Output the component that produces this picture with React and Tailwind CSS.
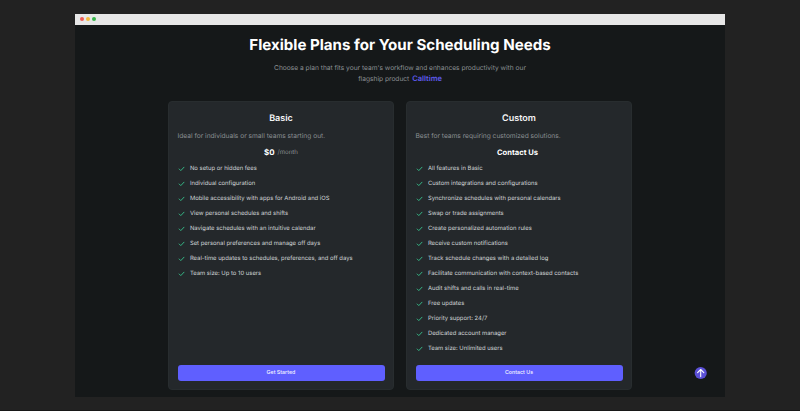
import React from "react";

const basic = [
  "No setup or hidden fees",
  "Individual configuration",
  "Mobile accessibility with apps for Android and iOS",
  "View personal schedules and shifts",
  "Navigate schedules with an intuitive calendar",
  "Set personal preferences and manage off days",
  "Real-time updates to schedules, preferences, and off days",
  "Team size: Up to 10 users",
];

const custom = [
  "All features in Basic",
  "Custom integrations and configurations",
  "Synchronize schedules with personal calendars",
  "Swap or trade assignments",
  "Create personalized automation rules",
  "Receive custom notifications",
  "Track schedule changes with a detailed log",
  "Facilitate communication with context-based contacts",
  "Audit shifts and calls in real-time",
  "Free updates",
  "Priority support: 24/7",
  "Dedicated account manager",
  "Team size: Unlimited users",
];

function Check() {
  return (
    <svg className="h-[7px] w-[7px] shrink-0 text-[#35b585]" viewBox="0 0 7 7" fill="none" stroke="currentColor" strokeWidth="1" strokeLinecap="round" strokeLinejoin="round">
      <path d="M1.2 3 L2.8 4.6 L6 1.2" />
    </svg>
  );
}

function Plan({ name, description, price, features, action }) {
  return (
    <section className="flex h-[289px] w-[226px] flex-col rounded-[4px] border border-[#282d2f] bg-[#24282b] px-[8.5px] pt-[10px] pb-[8.5px]">
      <h2 className="text-center text-[9px] leading-[14px] font-semibold text-[#f4f5f6]">{name}</h2>
      <p className="mt-[5px] text-[6.63px] leading-[10px] text-[#8b9093]">{description}</p>
      <div className="mt-[6px] flex h-[12px] items-center justify-center">{price}</div>
      <ul className="mt-[2.6px] flex flex-col">
        {features.map((feature) => (
          <li key={feature} className="flex h-[15px] items-center gap-[5.4px]">
            <Check />
            <span className="text-[5.9px] leading-[10px] whitespace-nowrap text-[#d0d4d6]">{feature}</span>
          </li>
        ))}
      </ul>
      <button className="mt-auto h-[15.5px] shrink-0 rounded-[3px] bg-[#5f5fff] text-[5.3px] leading-none font-medium text-[#f3f3ff]">{action}</button>
    </section>
  );
}

export default function App() {
  return (
    <div className="h-[411px] w-[800px] overflow-hidden border-b border-[#171717] bg-[#222222] pt-[14px] font-['Inter',sans-serif] [text-rendering:geometricPrecision]">
      <div className="relative mx-auto flex h-[383px] w-[650px] flex-col bg-[#151819]">
        <div className="flex h-[10.5px] shrink-0 items-center gap-[2.4px] bg-[#e7e7e7] pl-[4.6px]">
          <span className="h-[4px] w-[4px] rounded-full bg-[#ee5b55]" />
          <span className="h-[4px] w-[4px] rounded-full bg-[#f3bb3d]" />
          <span className="h-[4px] w-[4px] rounded-full bg-[#36b54a]" />
        </div>
        <h1 className="mt-[10.5px] text-center text-[15.1px] leading-[20px] font-bold text-white">Flexible Plans for Your Scheduling Needs</h1>
        <p className="mt-[8px] mb-[17px] text-center text-[6.63px] leading-[10.5px] text-[#8c9194]">
          Choose a plan that fits your team's workflow and enhances productivity with our
          <br />
          flagship product <span className="ml-[1px] text-[7.5px] font-semibold text-[#5f5bef]">Calltime</span>
        </p>
        <div className="flex justify-center gap-[12px]">
          <Plan
            name="Basic"
            description="Ideal for individuals or small teams starting out."
            price={
              <>
                <span className="text-[7.9px] font-bold text-white">$0</span>
                <span className="ml-[3px] text-[6.1px] text-[#8b9093]">/month</span>
              </>
            }
            features={basic}
            action="Get Started"
          />
          <Plan
            name="Custom"
            description="Best for teams requiring customized solutions."
            price={<span className="mr-[3px] text-[7.6px] font-bold text-white">Contact Us</span>}
            features={custom}
            action="Contact Us"
          />
        </div>
        <svg className="absolute top-[352px] left-[619px] h-[14px] w-[14px]" viewBox="0 0 14 14" fill="none">
          <circle cx="6.7" cy="7" r="6.1" fill="#5b50d6" />
          <path d="M6.7 10.6 V3.6 M3.6 6.6 L6.7 3.5 L9.8 6.6" stroke="white" strokeWidth="1.1" strokeLinecap="round" strokeLinejoin="round" />
        </svg>
      </div>
    </div>
  );
}
